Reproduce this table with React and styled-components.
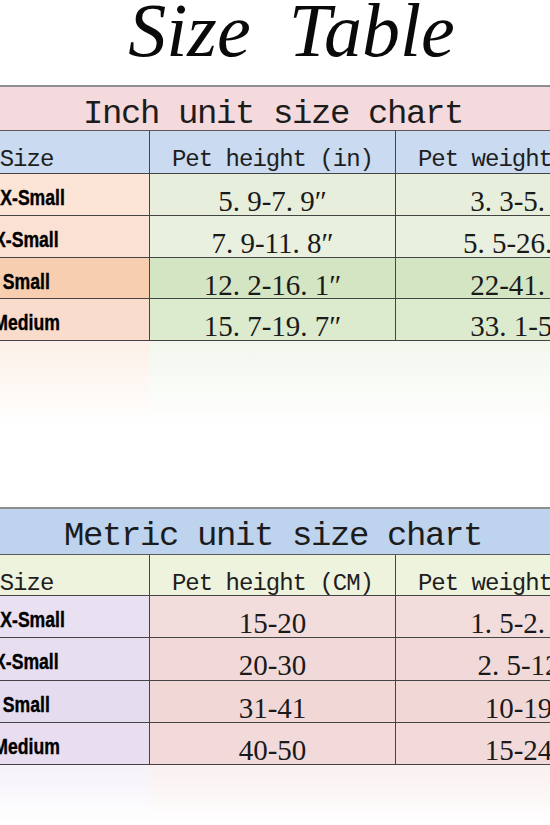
import React from "react";
import styled, { createGlobalStyle } from "styled-components";

const Global = createGlobalStyle`
  html, body { margin: 0; padding: 0; background: #ffffff; }
  body { overflow: hidden; }
`;

const Page = styled.div`
  width: 550px;
  height: 825px;
  overflow: hidden;
  background: #ffffff;
  display: flex;
  flex-direction: column;
`;

const Heading = styled.h1`
  margin: 0;
  height: 87px;
  padding-left: 33px;
  font-family: "Liberation Serif", "Times New Roman", serif;
  font-style: italic;
  font-weight: 400;
  font-size: 76px;
  line-height: 60px;
  text-align: center;
  color: #0a0a0a;
  white-space: pre;
  box-sizing: border-box;
`;

const Table = styled.div`
  margin-left: -96px;
  width: 738px;
  border-top: 2px solid #8e8e8e;
  flex-shrink: 0;
`;

const TitleRow = styled.div`
  height: ${(p) => p.$h}px;
  box-sizing: border-box;
  background: ${(p) => p.$bg};
  border-bottom: 1px solid #5a5a5a;
  padding-top: 10px;
  font-family: "Liberation Mono", "DejaVu Sans Mono", monospace;
  font-size: 34px;
  line-height: 34px;
  letter-spacing: -1.4px;
  color: #1c1c1c;
  text-align: center;
  white-space: pre;
`;

const Row = styled.div`
  display: grid;
  grid-template-columns: 246px 246px 246px;
  height: ${(p) => p.$h}px;
  box-sizing: border-box;
  border-bottom: 1px solid #444;
`;

const Cell = styled.div`
  background: ${(p) => p.$bg};
  border-right: 1px solid #444;
  box-sizing: border-box;
  text-align: center;
  white-space: pre;
  overflow: hidden;
  color: #111;
`;

const HeadCell = styled(Cell)`
  padding-top: 17px;
  font-family: "Liberation Mono", "DejaVu Sans Mono", monospace;
  font-size: 24px;
  line-height: 24px;
  letter-spacing: -1px;
  color: #1e1e1e;
`;

const SizeCell = styled(Cell)`
  padding-top: 13px;
  font-family: "Liberation Sans", Arial, sans-serif;
  font-weight: 700;
  font-size: 22px;
  line-height: 22px;
  color: #000;
`;

const Label = styled.span`
  display: inline-block;
  transform: scaleX(0.8);
  transform-origin: center;
  -webkit-text-stroke: 0.4px #000;
`;

const ValueCell = styled(Cell)`
  padding-top: 13px;
  font-family: "Liberation Serif", "Times New Roman", serif;
  font-size: 29px;
  line-height: 28px;
  color: #1a1a1a;
`;

const Reflection = styled.div`
  display: grid;
  grid-template-columns: 246px 246px 246px;
  margin-left: -96px;
  width: 738px;
  height: ${(p) => p.$h}px;
  flex-shrink: 0;
`;

const Fade = styled.div`
  background: linear-gradient(to bottom, ${(p) => p.$c}, rgba(255, 255, 255, 0));
`;

const Spacer = styled.div`
  height: ${(p) => p.$h}px;
  flex-shrink: 0;
`;

const inch = {
  title: "Inch unit size chart",
  titleBg: "#f4dadc",
  titleH: 44,
  headBg: "#c9daf1",
  head: ["Size", "Pet height (in)", "Pet weight (lb)"],
  headH: 43,
  rowH: 41.6,
  rows: [
    { size: "XX-Small", a: "5. 9-7. 9\u2033", b: "3. 3-5. 5", c1: "#fce4d7", c2: "#e7efdc" },
    { size: "X-Small", a: "7. 9-11. 8\u2033", b: "5. 5-26. 5", c1: "#fbe1d3", c2: "#e9f0df" },
    { size: "Small", a: "12. 2-16. 1\u2033", b: "22-41. 9", c1: "#f7ceb0", c2: "#d4e5c4" },
    { size: "Medium", a: "15. 7-19. 7\u2033", b: "33. 1-53", c1: "#f9dccc", c2: "#dcebce" },
  ],
};

const metric = {
  title: "Metric unit size chart",
  titleBg: "#bed3ee",
  titleH: 46,
  headBg: "#eef3de",
  head: ["Size", "Pet height (CM)", "Pet weight (KG)"],
  headH: 41.5,
  rowH: 42.2,
  rows: [
    { size: "XX-Small", a: "15-20", b: "1. 5-2. 5", c1: "#e9e1f1", c2: "#f3dcdc" },
    { size: "X-Small", a: "20-30", b: "2. 5-12", c1: "#e7dff0", c2: "#f2d9d9" },
    { size: "Small", a: "31-41", b: "10-19", c1: "#e5ddef", c2: "#f2d7d7" },
    { size: "Medium", a: "40-50", b: "15-24", c1: "#e8def0", c2: "#f2d9da" },
  ],
};

function SizeChart({ data }) {
  return (
    <Table>
      <TitleRow $bg={data.titleBg} $h={data.titleH}>{data.title}</TitleRow>
      <Row $h={data.headH}>
        {data.head.map((h) => (
          <HeadCell key={h} $bg={data.headBg}>{h}</HeadCell>
        ))}
      </Row>
      {data.rows.map((r) => (
        <Row key={r.size} $h={data.rowH}>
          <SizeCell $bg={r.c1}><Label>{r.size}</Label></SizeCell>
          <ValueCell $bg={r.c2}>{r.a}</ValueCell>
          <ValueCell $bg={r.c2}>{r.b}</ValueCell>
        </Row>
      ))}
    </Table>
  );
}

export default function App() {
  return (
    <>
      <Global />
      <Page>
        <Heading>{"Size  Table"}</Heading>
        <SizeChart data={inch} />
        <Reflection $h={85}>
          <Fade $c="rgba(250, 222, 205, 0.45)" />
          <Fade $c="rgba(225, 236, 212, 0.4)" />
          <Fade $c="rgba(225, 236, 212, 0.4)" />
        </Reflection>
        <Spacer $h={81} />
        <SizeChart data={metric} />
        <Reflection $h={60}>
          <Fade $c="rgba(232, 222, 240, 0.4)" />
          <Fade $c="rgba(242, 217, 218, 0.4)" />
          <Fade $c="rgba(242, 217, 218, 0.4)" />
        </Reflection>
      </Page>
    </>
  );
}
